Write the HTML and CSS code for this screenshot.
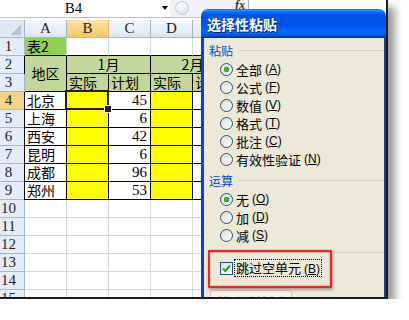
FILE: index.html
```html
<!doctype html>
<html>
	<head>
		<meta charset="utf-8">
		<title>选择性粘贴</title>
		<link rel="stylesheet" href="styles.css">
	</head>
	<body>
		<div class="shot">
			<div class="fbar">
				<div class="namebox"><span class="name">B4</span><span class="drop"></span></div>
				<span class="knob"></span>
				<span class="fx"><i>f</i>x</span>
				<div class="input"></div>
			</div>
			<div class="sheet">
				<div class="ch corner"></div><div class="ch">A</div><div class="ch cur">B</div><div class="ch">C</div><div class="ch">D</div><div class="ch">E</div>

				<div class="rh">1</div><div class="green top">表2</div><div class="top"></div><div class="top"></div><div class="top"></div><div class="top"></div>

				<div class="rh">2</div><div class="b hd first mid rows2">地区</div><div class="b hd mid cols2">1月</div><div class="b hd mid cols2">2月</div>
				<div class="rh">3</div><div class="b hd">实际</div><div class="b hd">计划</div><div class="b hd">实际</div><div class="b hd">计划</div>

				<div class="rh cur">4</div><div class="b first">北京</div><div class="b y sel"></div><div class="b num">45</div><div class="b y"></div><div class="b"></div>
				<div class="rh">5</div><div class="b first">上海</div><div class="b y"></div><div class="b num">6</div><div class="b y"></div><div class="b"></div>
				<div class="rh">6</div><div class="b first">西安</div><div class="b y"></div><div class="b num">42</div><div class="b y"></div><div class="b"></div>
				<div class="rh">7</div><div class="b first">昆明</div><div class="b y"></div><div class="b num">6</div><div class="b y"></div><div class="b"></div>
				<div class="rh">8</div><div class="b first">成都</div><div class="b y"></div><div class="b num">96</div><div class="b y"></div><div class="b"></div>
				<div class="rh">9</div><div class="b first">郑州</div><div class="b y"></div><div class="b num">53</div><div class="b y"></div><div class="b"></div>

				<div class="rh">10</div><div></div><div></div><div></div><div></div><div></div>
				<div class="rh">11</div><div></div><div></div><div></div><div></div><div></div>
				<div class="rh">12</div><div></div><div></div><div></div><div></div><div></div>
				<div class="rh">13</div><div></div><div></div><div></div><div></div><div></div>
				<div class="rh">14</div><div></div><div></div><div></div><div></div><div></div>
				<div class="rh">15</div><div></div><div></div><div></div><div></div><div></div>
			</div>

			<div class="dlg">
				<div class="dlg-title">选择性粘贴</div>
				<div class="dlg-body">
					<div class="group">
						<div class="legend"><span>粘贴</span><i></i></div>
						<div class="opts">
							<div class="opt"><span class="radio on"></span>全部 <span class="key">(<u>A</u>)</span></div>
							<div class="opt"><span class="radio"></span>公式 <span class="key">(<u>F</u>)</span></div>
							<div class="opt"><span class="radio"></span>数值 <span class="key">(<u>V</u>)</span></div>
							<div class="opt"><span class="radio"></span>格式 <span class="key">(<u>T</u>)</span></div>
							<div class="opt"><span class="radio"></span>批注 <span class="key">(<u>C</u>)</span></div>
							<div class="opt"><span class="radio"></span>有效性验证 <span class="key">(<u>N</u>)</span></div>
						</div>
					</div>
					<div class="group">
						<div class="legend"><span>运算</span><i></i></div>
						<div class="opts">
							<div class="opt"><span class="radio on"></span>无 <span class="key">(<u>O</u>)</span></div>
							<div class="opt"><span class="radio"></span>加 <span class="key">(<u>D</u>)</span></div>
							<div class="opt"><span class="radio"></span>减 <span class="key">(<u>S</u>)</span></div>
						</div>
					</div>
					<div class="sep"></div>
					<div class="check">
						<span class="cbox">
							<svg width="11" height="11" viewBox="0 0 11 11"><path d="M2 5.5 L4.3 8 L9 2.5" fill="none" stroke="#21a121" stroke-width="2"/></svg>
						</span>
						<span class="focus">跳过空单元 <span class="key">(<u>B</u>)</span></span>
					</div>
					<div class="btn">粘贴链接(L)</div>
				</div>
				<div class="mark"></div>
			</div>
		</div>
	</body>
</html>
```

FILE: styles.css
```css
* {
	margin: 0px;
	padding: 0px;
	box-sizing: border-box;
}
body {
	background: #fff;
	font-family: "Noto Sans CJK SC", sans-serif;
	color: #000;
}
.shot {
	position: relative;
	width: 388px;
	height: 299px;
	border-right: 2px solid #1c1c1c;
	border-bottom: 2px solid #1c1c1c;
	box-shadow: 7px 7px 8px rgba(0, 0, 0, 0.4);
	overflow: hidden;
	background: #fff;
}

/* formula bar */
.fbar {
	display: flex;
	height: 18px;
	border-bottom: 1px solid #b3bfd0;
	margin-bottom: 2px;
	background: #f0f2f5;
}
.namebox {
	display: flex;
	width: 170px;
	background: #fff;
}
.name {
	width: 147px;
	text-align: center;
	font: 15px/17px "Liberation Serif", serif;
}
.drop {
	width: 0;
	height: 0;
	margin: 6px 0 0 15px;
	border-left: 3px solid transparent;
	border-right: 3px solid transparent;
	border-top: 4px solid #000;
}
.knob {
	width: 14px;
	height: 14px;
	margin: 1px 0 0 5px;
	border-radius: 50%;
	border: 1px solid #c3c9d2;
	background: radial-gradient(circle at 40% 35%, #fff, #d5d9df);
}
.fx {
	margin-left: 46px;
	font: italic bold 12px/10px "Liberation Serif", serif;
	color: #333;
}
.input {
	flex: 1;
	margin-left: 3px;
	background: #fff;
	border-left: 1px solid #a5acb5;
}

/* sheet */
.sheet {
	display: grid;
	grid-template-columns: 25px repeat(5, 42px);
	grid-auto-rows: 18px;
	font-size: 14px;
}
.sheet > div {
	display: flex;
	align-items: center;
	padding: 0 2px;
	border-right: 1px solid #d0d7e5;
	border-bottom: 1px solid #d0d7e5;
	line-height: 17px;
	white-space: nowrap;
}
.sheet .ch {
	justify-content: center;
	background: linear-gradient(#f6f9fd, #dbe5f3);
	border-color: #9eb6ce;
	font: 15px "Liberation Serif", serif;
	color: #222;
}
.sheet .ch.cur {
	background: linear-gradient(#fbe2a8, #f5c866);
	border-color: #e9b55c;
}
.sheet .corner {
	background: linear-gradient(135deg, transparent 50%, #b6c4d6 50%) no-repeat right 3px bottom 2px / 11px 10px, #dfe8f5;
}
.sheet .rh {
	justify-content: center;
	padding: 0 7px 0 0;
	background: #e4ecf7;
	border-color: #9eb6ce;
	font: 15px "Liberation Serif", serif;
	color: #222;
}
.sheet .rh.cur {
	background: #f7d38a;
	border-bottom-color: #e9b55c;
}
.sheet .green {
	background: #92d050;
}
.sheet .top {
	border-bottom-color: #000;
}
.sheet .b {
	border-color: #000;
}
.sheet .first {
	box-shadow: -1px 0 0 #000;
}
.sheet .hd {
	background: #c4d79b;
}
.sheet .mid {
	justify-content: center;
}
.rows2 {
	grid-row: span 2;
}
.cols2 {
	grid-column: span 2;
}
.sheet .y {
	background: #ffff00;
}
.sheet .num {
	justify-content: flex-end;
	padding-right: 3px;
	font: 15px "Liberation Serif", serif;
}
.sheet .sel {
	position: relative;
	z-index: 1;
}
.sel::after {
	content: "";
	position: absolute;
	left: -2px;
	top: -2px;
	right: -1px;
	bottom: -1px;
	border: 2px solid #1e1e1e;
}
.sel::before {
	content: "";
	position: absolute;
	right: -4px;
	bottom: -4px;
	width: 6px;
	height: 6px;
	background: #1e1e1e;
	border: 1px solid #fff;
	z-index: 2;
}

/* paste special dialog */
.dlg {
	position: absolute;
	left: 201px;
	top: 9px;
	width: 185px;
	height: 300px;
	font-size: 13px;
}
.dlg-title {
	height: 29px;
	padding: 5px 0 0 6px;
	border-radius: 7px 7px 0 0;
	background: linear-gradient(#0058ee 0%, #3593ff 4%, #288eff 6%, #127dff 8%, #036ffc 10%, #0262ee 14%, #0057e5 20%, #0054e3 24%, #0055eb 56%, #005bf5 66%, #026afe 76%, #0062ef 86%, #0052d6 92%, #0040ab 96%, #003092 100%);
	color: #fff;
	font-weight: bold;
	font-size: 14px;
	line-height: 20px;
	text-shadow: 1px 1px 0 #0a1883;
}
.dlg-body {
	height: 100%;
	padding: 3px 0 0 5px;
	background: #ece9d8;
	border-left: 3px solid #0b3fd6;
	border-right: 2px solid #233f8c;
}
.legend {
	display: flex;
	align-items: center;
	gap: 6px;
	height: 18px;
	color: #0046d5;
	font-size: 12px;
}
.legend i {
	flex: 1;
	height: 1px;
	background: #d0d0bf;
}
.group + .group {
	margin-top: 3px;
}
.opts {
	margin-top: 1px;
	padding-left: 11px;
}
.opt {
	display: flex;
	align-items: center;
	gap: 3px;
	height: 18px;
	white-space: nowrap;
}
.key {
	font: 12px "Liberation Sans", sans-serif;
}
.radio {
	width: 13px;
	height: 13px;
	border-radius: 50%;
	border: 1px solid #1c5180;
	background: linear-gradient(135deg, #dcdcd7, #fff);
}
.radio.on {
	background: radial-gradient(circle, #4fc14b 0, #21a121 2.5px, transparent 3px), linear-gradient(135deg, #dcdcd7, #fff);
}
.sep {
	height: 1px;
	margin-top: 8px;
	background: #d0d0bf;
}
.check {
	position: relative;
	z-index: 1;
	display: flex;
	align-items: center;
	gap: 2px;
	height: 18px;
	margin-top: 6px;
	padding-left: 11px;
}
.cbox {
	display: flex;
	align-items: center;
	justify-content: center;
	width: 13px;
	height: 13px;
	border: 1px solid #1c5180;
	background: linear-gradient(135deg, #dcdcd7, #fff);
}
.focus {
	padding: 0 1px;
	line-height: 16px;
	outline: 1px dotted #000;
}
.btn {
	width: 82px;
	height: 23px;
	margin: 13px 0 0 1px;
	border: 1px solid #c9c7ba;
	border-radius: 3px;
	background: #f5f4ea;
	color: #aca899;
	text-align: center;
	line-height: 21px;
}
.mark {
	position: absolute;
	left: 7px;
	top: 241px;
	width: 124px;
	height: 38px;
	border: 2px solid #e8262b;
	border-radius: 1px;
	box-shadow: 0 0 1px #f04040, 1px 2px 3px rgba(0, 0, 0, 0.3), inset 0 0 2px rgba(230, 40, 40, 0.6);
}
```
